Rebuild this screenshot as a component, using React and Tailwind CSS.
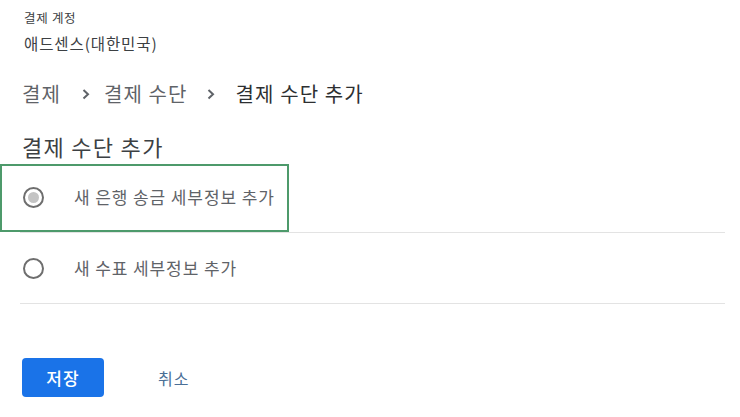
import React from 'react';

const Chevron = () => (
  <svg width="8" height="12" viewBox="0 0 8 12" className="shrink-0">
    <path d="M1.5 2 L6 6.2 L1.5 10.4" fill="none" stroke="#5f6368" strokeWidth="2" />
  </svg>
);

const Radio = ({ checked }) => (
  <div className="w-[21px] h-[21px] rounded-full border-2 border-[#6e6e6e] flex items-center justify-center shrink-0">
    {checked && <div className="w-[11px] h-[11px] rounded-full bg-[#c4c4c4]" />}
  </div>
);

export default function App() {
  const options = [
    { label: '새 은행 송금 세부정보 추가', checked: true },
    { label: '새 수표 세부정보 추가', checked: false },
  ];

  return (
    <div className="min-h-screen bg-white pl-[22px] pr-[15px] pt-[10px] font-['Noto_Sans_CJK_KR',sans-serif]">
      {/* account */}
      <p className="ml-[2px] text-[12.5px] leading-[16px] tracking-[0.7px] text-[#3c4043]">결제 계정</p>
      <p className="ml-[2px] mt-[7px] text-[15.5px] leading-[20px] tracking-[0.9px] text-[#3c4043]">애드센스(대한민국)</p>

      {/* breadcrumb */}
      <div className="mt-[27px] flex items-center h-[28px] text-[20px] tracking-[1.1px] text-[#5f6368]">
        <span>결제</span>
        <span className="ml-[21px] mr-[14px] flex"><Chevron /></span>
        <span>결제 수단</span>
        <span className="ml-[19px] mr-[21px] flex"><Chevron /></span>
        <span className="text-[#2d2f31]">결제 수단 추가</span>
      </div>

      <h1 className="mt-[23px] text-[22px] leading-[30px] tracking-[1.3px] text-[#3c4043] font-normal">결제 수단 추가</h1>

      {/* options */}
      <div className="mt-[1px] -ml-[2px]">
        {options.map((opt, i) => (
          <div key={i} className="relative h-[71px] flex items-center border-b border-[#e3e3e3]">
            {opt.checked && (
              <div className="absolute -left-[20px] top-[2px] w-[289px] h-[68px] border-2 border-[#4d9a6b]" />
            )}
            <div className="ml-[3px]"><Radio checked={opt.checked} /></div>
            <span className="ml-[30px] text-[17px] tracking-[0.9px] text-[#5f6368]">{opt.label}</span>
          </div>
        ))}
      </div>

      {/* actions */}
      <div className="mt-[54px] flex items-center">
        <button className="w-[82px] h-[39px] rounded-[4px] bg-[#1a73e8] text-white text-[17px] tracking-[1px] font-medium">
          저장
        </button>
        <button className="ml-[54px] text-[16px] tracking-[1px] text-[#4a6f96]">취소</button>
      </div>
    </div>
  );
}
